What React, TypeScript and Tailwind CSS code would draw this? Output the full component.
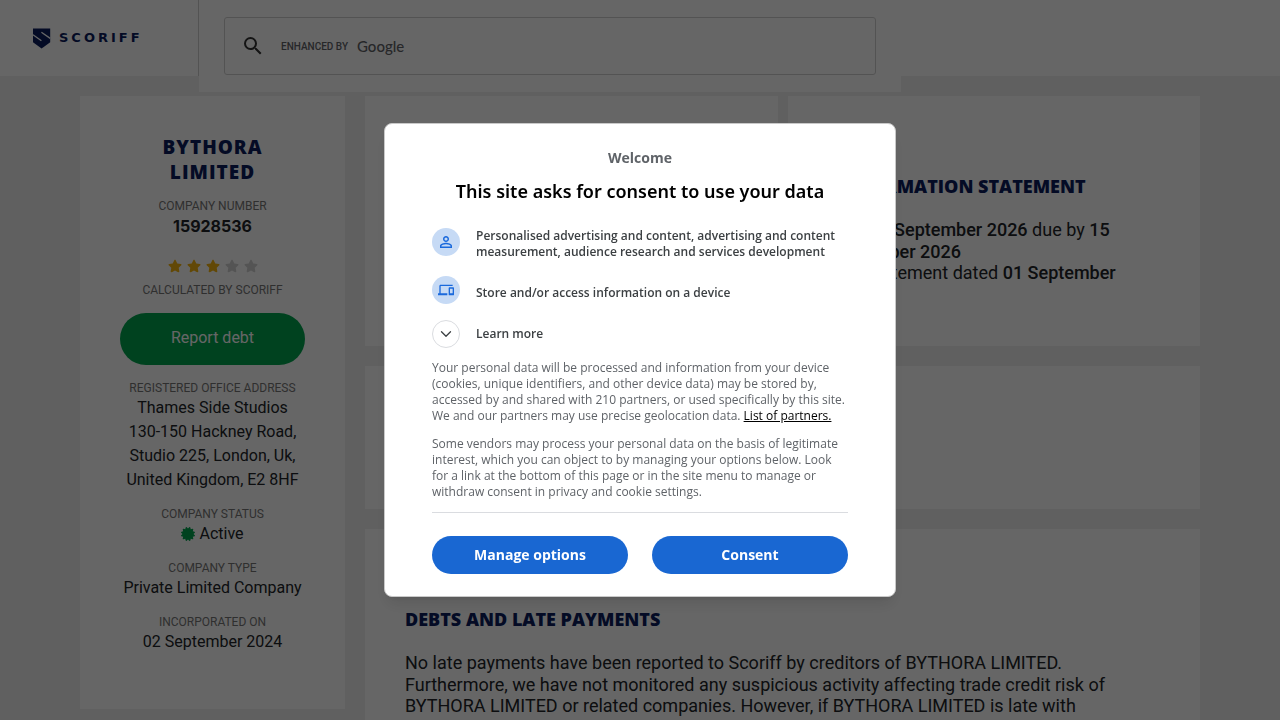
import type { ReactNode } from "react";
import { ChevronDown } from "lucide-react";
import { FaCertificate, FaStar } from "react-icons/fa";
import { MdDevices, MdPersonOutline, MdSearch } from "react-icons/md";

const RATING = 3;

function Logo() {
  return (
    <a href="#" className="flex items-center gap-2 text-[#0a1c5e]">
      <svg width="19" height="22" viewBox="0 0 19 22" aria-hidden="true">
        <path d="M1 1.5h17.2v13.8L9.6 21.5 1 15.3z" fill="currentColor" />
        <path d="M1 7.8l8.4 6M9.4 5.2l8.8 6.2" stroke="#fff" strokeWidth="1.3" fill="none" />
      </svg>
      <span className="font-['DejaVu_Sans',sans-serif] text-[13px] font-bold tracking-[3px]">SCORIFF</span>
    </a>
  );
}

function SearchBar() {
  return (
    <div className="h-[92px] w-[702px] bg-white px-[25px] pt-[17px]">
      <form className="flex h-[58px] items-center rounded-[3px] border border-[#d0d0d0] pl-4">
        <button type="button" aria-label="Search" className="text-[#333]">
          <MdSearch size={24} />
        </button>
        <label htmlFor="search" className="flex items-center gap-[9px] pl-4 text-[#5f6368]">
          <span className="text-[10px] font-medium">ENHANCED BY</span>
          <span className="font-['Lato',sans-serif] text-[15px] font-medium">Google</span>
        </label>
        <input id="search" type="text" className="h-full min-w-0 flex-1 bg-transparent px-2 outline-none" />
      </form>
    </div>
  );
}

function Detail({ label, children }: { label: string; children: ReactNode }) {
  return (
    <div>
      <dt className="text-xs leading-4 text-[#777]">{label}</dt>
      <dd className="text-base leading-6">{children}</dd>
    </div>
  );
}

function Sidebar() {
  return (
    <aside className="w-[265px] shrink-0 self-start bg-white px-10 pt-[39px] pb-[55px] text-center">
      <h1 className="px-8 font-['Open_Sans',sans-serif] text-[19px] leading-[25px] font-extrabold tracking-[1px] text-[#0a1c5e]">
        BYTHORA LIMITED
      </h1>
      <dl className="mt-[13px]">
        <Detail label="COMPANY NUMBER">
          <b className="block font-['Inter',sans-serif]">15928536</b>
        </Detail>
      </dl>
      <div className="mt-[21px] flex justify-center gap-[5px]" role="img" aria-label="3 out of 5 stars">
        {[1, 2, 3, 4, 5].map((n) => (
          <FaStar key={n} size={14} className={n <= RATING ? "text-[#f5b50f]" : "text-[#d2d2d2]"} />
        ))}
      </div>
      <p className="mt-[9px] text-xs leading-4 text-[#777]">CALCULATED BY SCORIFF</p>
      <button
        type="button"
        className="mt-[15px] h-[52px] w-full rounded-full bg-[#00a54f] pb-0.5 text-base text-white"
      >
        Report debt
      </button>
      <dl className="mt-[15px] flex flex-col gap-[14px]">
        <Detail label="REGISTERED OFFICE ADDRESS">
          Thames Side Studios
          <br />
          130-150 Hackney Road,
          <br />
          Studio 225, London, Uk,
          <br />
          United Kingdom, E2 8HF
        </Detail>
        <Detail label="COMPANY STATUS">
          <span className="flex items-center justify-center gap-1">
            <FaCertificate size={14} className="text-[#00a54f]" />
            Active
          </span>
        </Detail>
        <Detail label="COMPANY TYPE">Private Limited Company</Detail>
        <Detail label="INCORPORATED ON">02 September 2024</Detail>
      </dl>
    </aside>
  );
}

function Panel({ title, children }: { title: string; children: ReactNode }) {
  return (
    <section className="min-w-0 bg-white px-10 pt-[78px] pb-10">
      <h2 className="font-['Open_Sans',sans-serif] text-lg leading-6 font-extrabold text-[#0a1c5e]">{title}</h2>
      <p className="mt-[21px] text-lg leading-[1.2]">{children}</p>
    </section>
  );
}

function ConsentRow({ icon, children }: { icon: ReactNode; children: ReactNode }) {
  return (
    <li className="flex items-start gap-4">
      <span className="flex size-7 shrink-0 items-center justify-center rounded-full bg-[#c6daf5] text-[#1a69dc]">
        {icon}
      </span>
      {children}
    </li>
  );
}

function ConsentDialog() {
  return (
    <div className="fixed inset-0 flex items-center justify-center bg-black/60">
      <div
        role="dialog"
        aria-modal="true"
        aria-labelledby="consent-title"
        className="w-[512px] rounded-lg border border-[#c9c9c9] bg-white px-[47px] pt-6 pb-[22px] font-['Open_Sans',sans-serif] shadow-lg"
      >
        <p className="text-center text-sm leading-5 font-bold text-[#5f6368]">Welcome</p>
        <h2
          id="consent-title"
          className="mt-[11px] text-center font-['Noto_Sans',sans-serif] text-lg leading-6 font-semibold text-black"
        >
          This site asks for consent to use your data
        </h2>
        <div className="mt-[25px] text-xs leading-4 font-semibold text-[#3c4043]">
          <ul className="flex flex-col gap-4">
            <ConsentRow icon={<MdPersonOutline size={18} />}>
              <span>
                Personalised advertising and content, advertising and content measurement, audience research and
                services development
              </span>
            </ConsentRow>
            <ConsentRow icon={<MdDevices size={16} />}>
              <span className="pt-[9px]">Store and/or access information on a device</span>
            </ConsentRow>
          </ul>
          <button type="button" className="mt-4 flex items-center gap-4">
            <span className="flex size-7 items-center justify-center rounded-full border border-[#dadce0]">
              <ChevronDown size={18} strokeWidth={1.75} />
            </span>
            Learn more
          </button>
        </div>
        <div className="mt-3 flex flex-col gap-3 border-b border-[#dadce0] pb-3 text-xs leading-4 text-[#5f6368]">
          <p>
            Your personal data will be processed and information from your device (cookies, unique identifiers, and other
            device data) may be stored by, accessed by and shared with 210 partners, or used specifically by this site.
            We and our partners may use precise geolocation data.{" "}
            <a href="#" className="text-black underline">
              List of partners.
            </a>
          </p>
          <p>
            Some vendors may process your personal data on the basis of legitimate interest, which you can object to by
            managing your options below. Look for a link at the bottom of this page or in the site menu to manage or
            withdraw consent in privacy and cookie settings.
          </p>
        </div>
        <div className="mt-[23px] flex gap-6 text-sm font-bold text-white">
          <button type="button" className="h-[38px] flex-1 rounded-full bg-[#1967d2]">
            Manage options
          </button>
          <button type="button" className="h-[38px] flex-1 rounded-full bg-[#1967d2]">
            Consent
          </button>
        </div>
      </div>
    </div>
  );
}

export default function App() {
  return (
    <div className="h-screen overflow-hidden bg-[#f0f0f0] font-['Roboto',sans-serif] text-[#212529]">
      <header className="flex h-[76px] items-start bg-white">
        <div className="flex h-full w-[199px] items-center border-r border-[#d0d0d0] pl-8">
          <Logo />
        </div>
        <SearchBar />
      </header>
      <main className="flex gap-5 px-20 pt-5">
        <Sidebar />
        <div className="flex min-w-0 flex-1 flex-col gap-5">
          <div className="grid min-h-[250px] grid-cols-2 gap-[10px]">
            <section className="bg-white" />
            <Panel title="CONFIRMATION STATEMENT">
              Next <span className="font-medium">01 September 2026</span> due by{" "}
              <span className="font-medium">15 September 2026</span>
              <br />
              Last statement dated <span className="font-medium">01 September 2025</span>
            </Panel>
          </div>
          <section className="h-[143px] bg-white" />
          <Panel title="DEBTS AND LATE PAYMENTS">
            No late payments have been reported to Scoriff by creditors of BYTHORA LIMITED. Furthermore, we have not
            monitored any suspicious activity affecting trade credit risk of BYTHORA LIMITED or related companies.
            However, if BYTHORA LIMITED is late with
          </Panel>
        </div>
      </main>
      <ConsentDialog />
    </div>
  );
}
